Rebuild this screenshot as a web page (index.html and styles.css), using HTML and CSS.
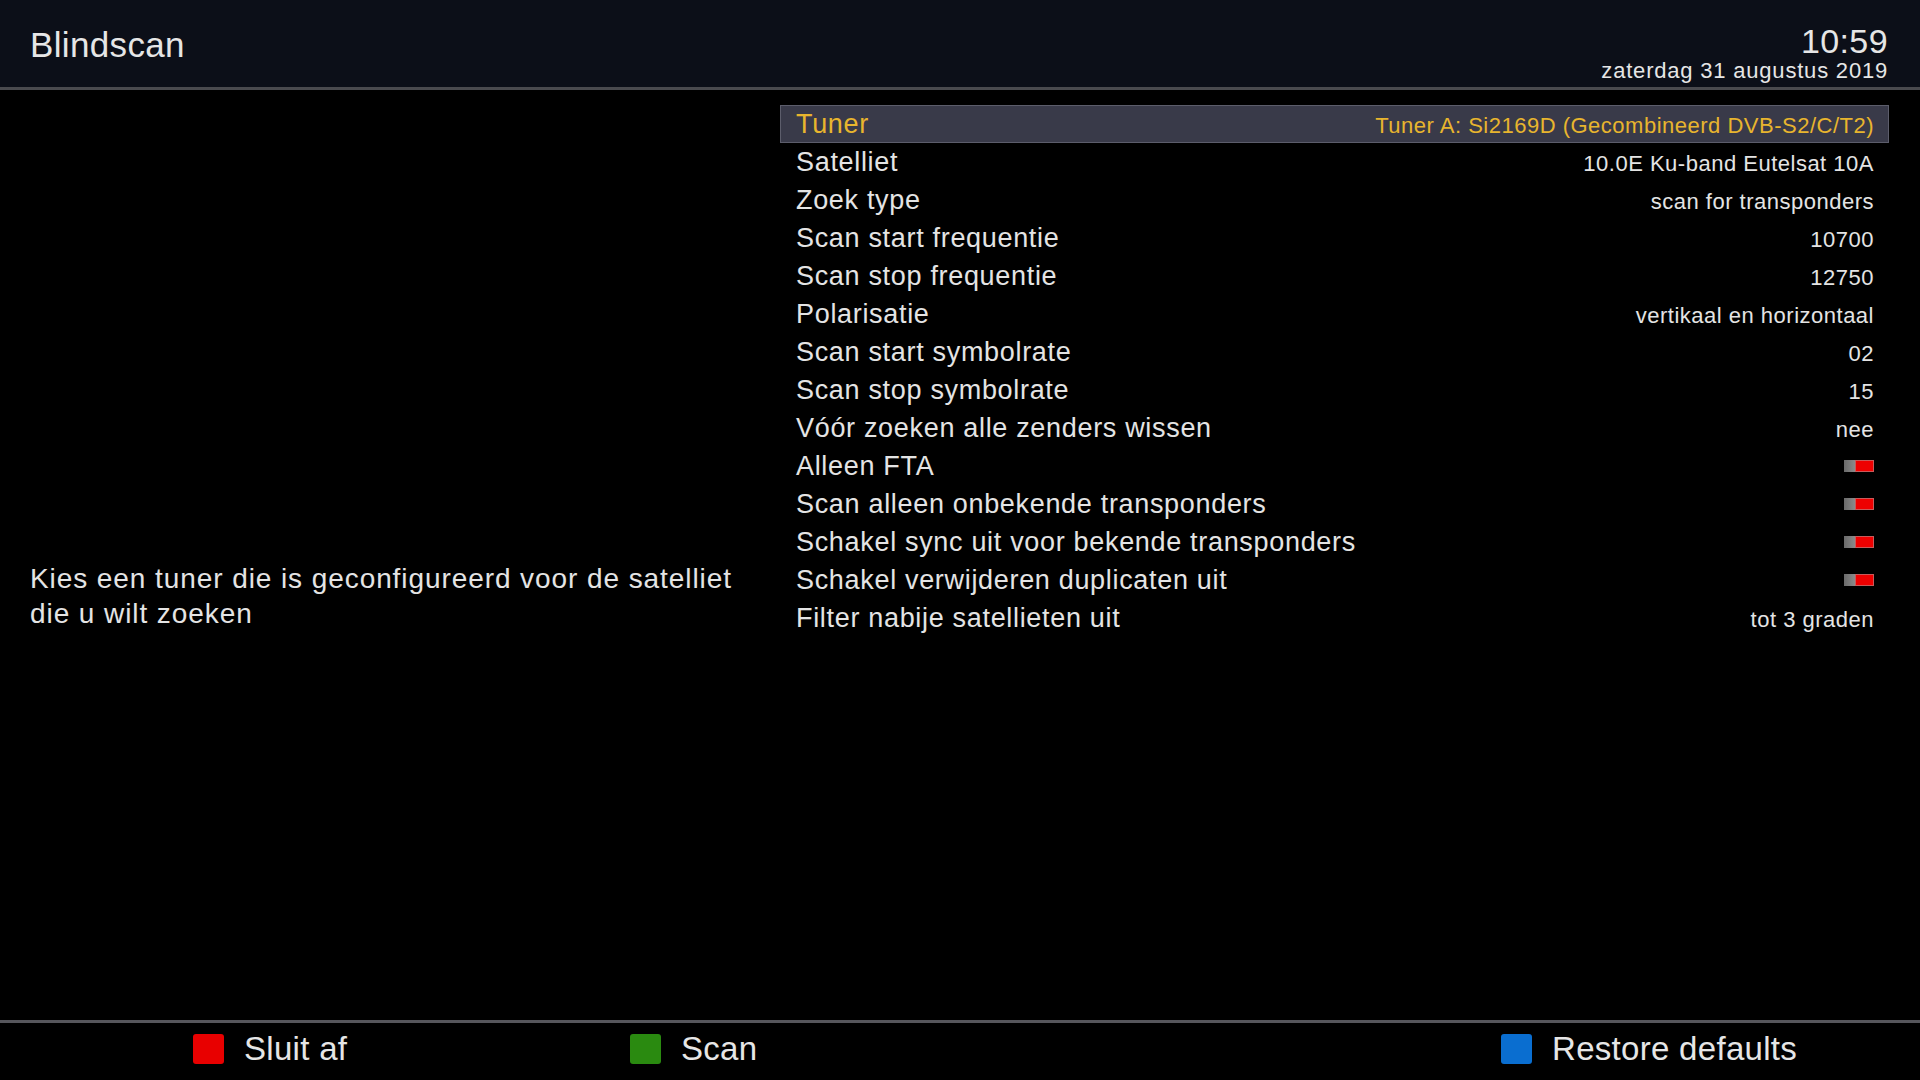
FILE: index.html
```html
<!DOCTYPE html>
<html lang="nl">
<head>
<meta charset="utf-8">
<title>Blindscan</title>
<link rel="stylesheet" href="styles.css">
</head>
<body>
<div class="screen">
  <header class="header">
    <div class="title">Blindscan</div>
    <div class="clock">
      <div class="time">10:59</div>
      <div class="date">zaterdag 31 augustus 2019</div>
    </div>
  </header>
  <main class="main">
    <div class="desc">Kies een tuner die is geconfigureerd voor de satelliet die u wilt zoeken</div>
    <ul class="list">
      <li class="row selected"><span class="label">Tuner</span><span class="value">Tuner A: Si2169D (Gecombineerd DVB-S2/C/T2)</span></li>
      <li class="row"><span class="label">Satelliet</span><span class="value">10.0E Ku-band Eutelsat 10A</span></li>
      <li class="row"><span class="label">Zoek type</span><span class="value">scan for transponders</span></li>
      <li class="row"><span class="label">Scan start frequentie</span><span class="value">10700</span></li>
      <li class="row"><span class="label">Scan stop frequentie</span><span class="value">12750</span></li>
      <li class="row"><span class="label">Polarisatie</span><span class="value">vertikaal en horizontaal</span></li>
      <li class="row"><span class="label">Scan start symbolrate</span><span class="value">02</span></li>
      <li class="row"><span class="label">Scan stop symbolrate</span><span class="value">15</span></li>
      <li class="row"><span class="label">Vóór zoeken alle zenders wissen</span><span class="value">nee</span></li>
      <li class="row"><span class="label">Alleen FTA</span><span class="toggle"><span class="knob"></span><span class="off"></span></span></li>
      <li class="row"><span class="label">Scan alleen onbekende transponders</span><span class="toggle"><span class="knob"></span><span class="off"></span></span></li>
      <li class="row"><span class="label">Schakel sync uit voor bekende transponders</span><span class="toggle"><span class="knob"></span><span class="off"></span></span></li>
      <li class="row"><span class="label">Schakel verwijderen duplicaten uit</span><span class="toggle"><span class="knob"></span><span class="off"></span></span></li>
      <li class="row"><span class="label">Filter nabije satellieten uit</span><span class="value">tot 3 graden</span></li>
    </ul>
  </main>
  <footer class="footer">
    <div class="key key-red"><span class="sq red"></span><span class="key-text">Sluit af</span></div>
    <div class="key key-green"><span class="sq green"></span><span class="key-text">Scan</span></div>
    <div class="key key-blue"><span class="sq blue"></span><span class="key-text">Restore defaults</span></div>
  </footer>
</div>
</body>
</html>
```

FILE: styles.css
```css
html, body {
  margin: 0;
  padding: 0;
  background: #000;
}
body {
  font-family: "Liberation Sans", Arial, sans-serif;
  color: #e4e4e4;
}
.screen {
  width: 1920px;
  height: 1080px;
  display: flex;
  flex-direction: column;
  overflow: hidden;
  background: #000;
}
.header {
  height: 87px;
  flex: none;
  background: #0c0f18;
  border-bottom: 3px solid #4a4a4e;
  display: flex;
  justify-content: space-between;
  align-items: flex-start;
  padding: 0 32px 0 30px;
}
.title {
  font-size: 35px;
  line-height: 40px;
  letter-spacing: 0.35px;
  padding-top: 25px;
  color: #e6e6e6;
}
.clock {
  text-align: right;
  padding-top: 24px;
}
.time {
  font-size: 34px;
  line-height: 34px;
  letter-spacing: 0.4px;
  color: #e6e6e6;
}
.date {
  font-size: 22px;
  line-height: 25px;
  letter-spacing: 0.8px;
  color: #e6e6e6;
}
.main {
  flex: 1;
  display: flex;
  align-items: flex-start;
  padding: 15px 31px 0 30px;
}
.desc {
  width: 720px;
  margin-top: 456px;
  font-size: 28px;
  line-height: 35px;
  letter-spacing: 0.92px;
  color: #e4e4e4;
}
.list {
  list-style: none;
  margin: 0 0 0 30px;
  padding: 0;
  flex: 1;
}
.row {
  height: 38px;
  box-sizing: border-box;
  display: flex;
  justify-content: space-between;
  align-items: baseline;
  padding: 0 14px 0 15px;
  border: 1px solid transparent;
}
.row.selected {
  background: #393a49;
  border-color: #5c5d6b;
  color: #e8b52e;
}
.label {
  font-size: 27px;
  line-height: 36px;
  letter-spacing: 0.68px;
}
.value {
  font-size: 22px;
  line-height: 36px;
  letter-spacing: 0.5px;
}
.toggle {
  align-self: center;
  display: flex;
  width: 30px;
  height: 12px;
}
.knob {
  width: 11px;
  height: 12px;
  background: linear-gradient(90deg, #6a6a6a, #8a8a8a);
}
.off {
  flex: 1;
  height: 12px;
  box-sizing: border-box;
  background: #ee0000;
  border: 1px solid #c85a5a;
}
.footer {
  height: 57px;
  flex: none;
  border-top: 3px solid #56565c;
  display: flex;
  align-items: flex-start;
  padding-left: 193px;
}
.key {
  display: flex;
  align-items: center;
  gap: 20px;
  padding-top: 10px;
}
.key-red { width: 437px; }
.key-green { width: 871px; }
.sq {
  width: 31px;
  height: 30px;
  border-radius: 3px;
  flex: none;
}
.red { background: #e80000; }
.green { background: #2a8a10; }
.blue { background: #0a6ed0; }
.key-text {
  font-size: 33px;
  line-height: 32px;
  letter-spacing: 0.3px;
  color: #e6e6e6;
}
```
